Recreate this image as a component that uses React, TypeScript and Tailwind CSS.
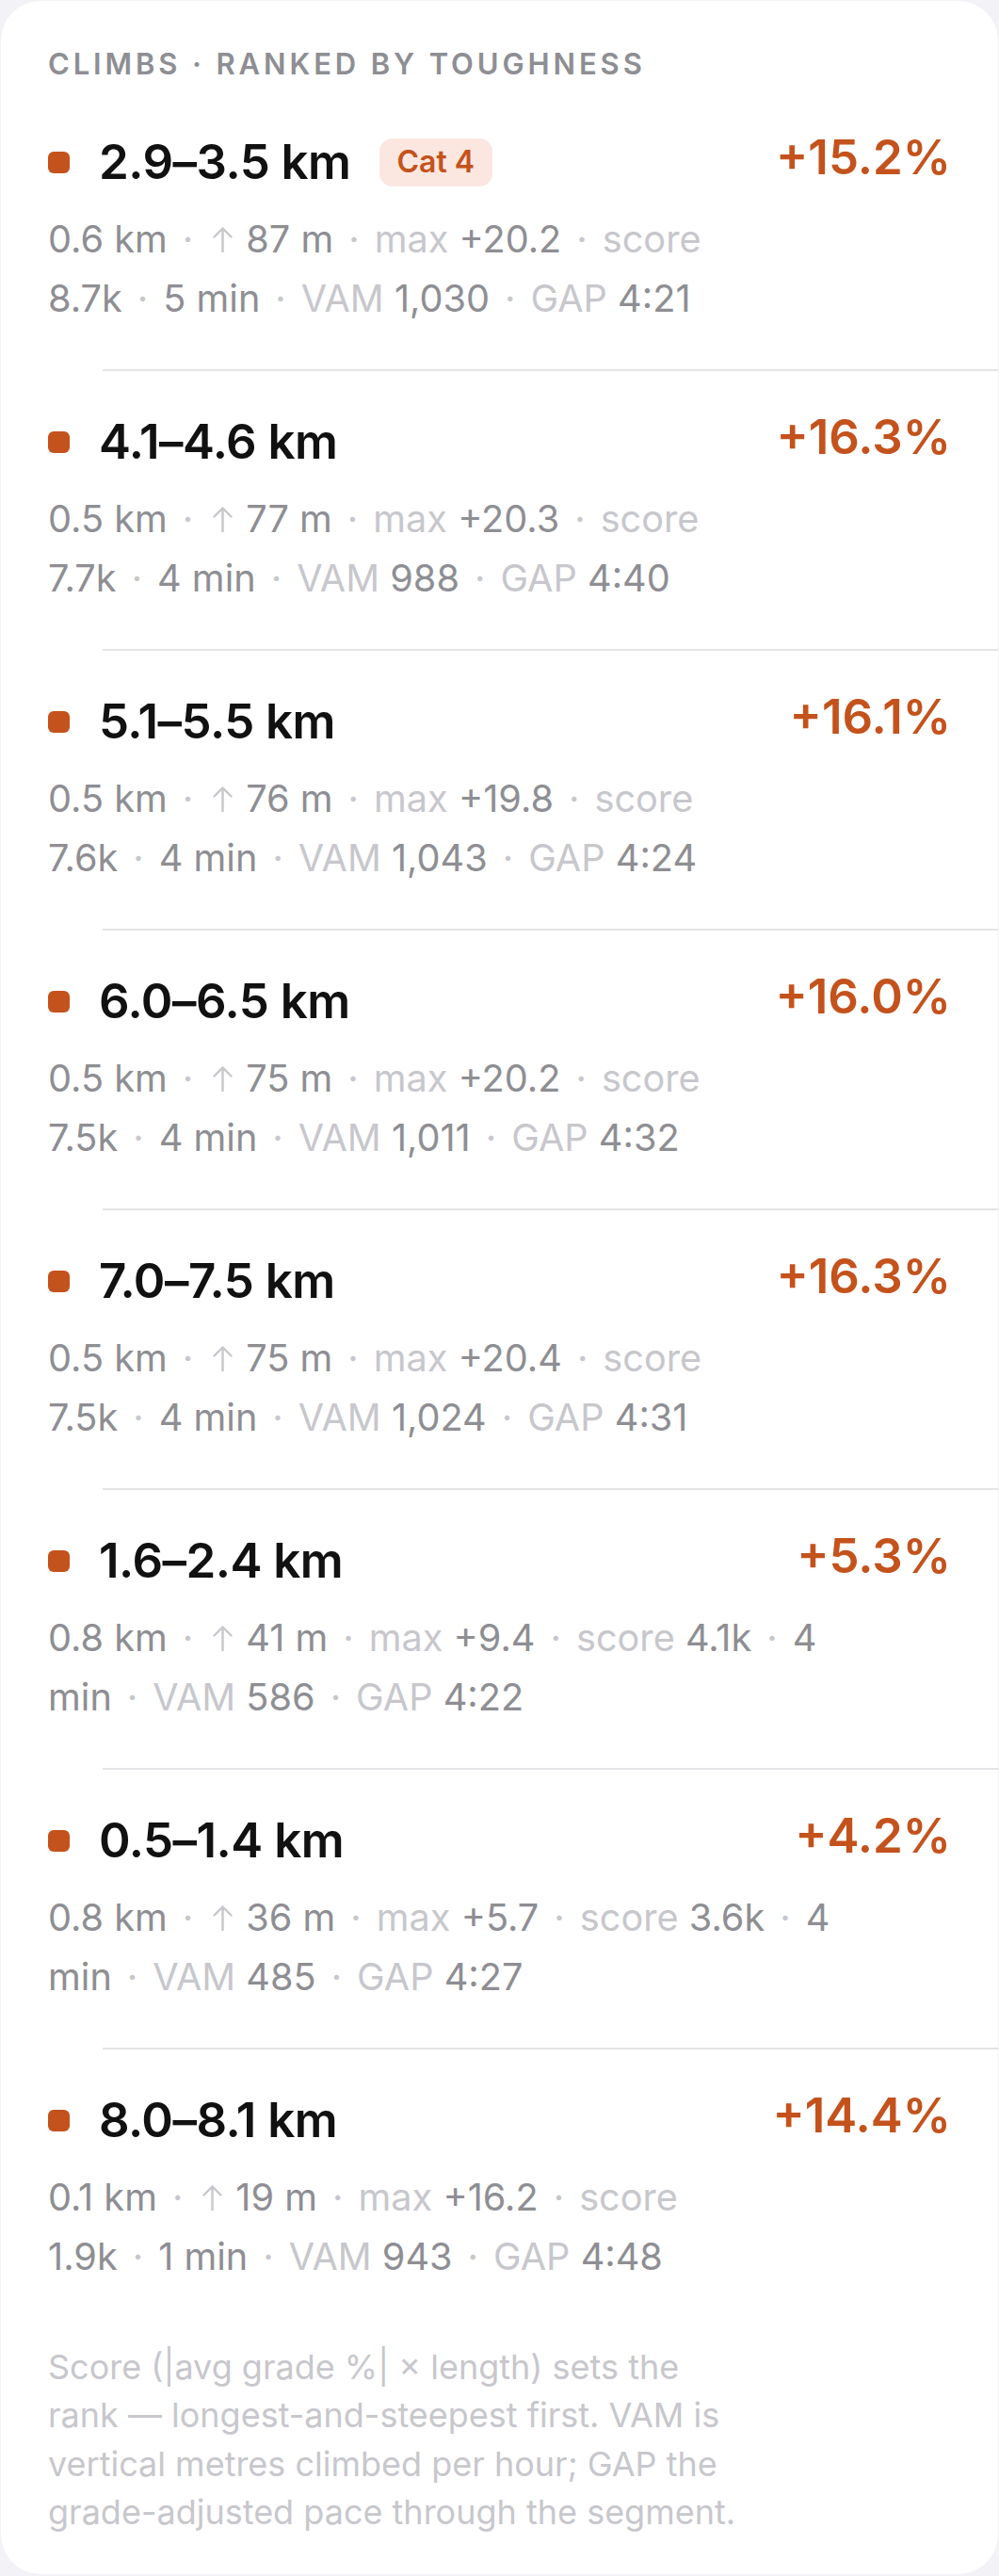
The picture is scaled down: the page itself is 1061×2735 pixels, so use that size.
import React from 'react';

type Climb = {
  range: string;
  cat?: string;
  pct: string;
  km: string;
  gain: string;
  max: string;
  score: string;
  min: string;
  vam: string;
  gap: string;
  wrap: 'long' | 'short';
};

const climbs: Climb[] = [
  { range: '2.9–3.5 km', cat: 'Cat 4', pct: '+15.2%', km: '0.6', gain: '87', max: '+20.2', score: '8.7k', min: '5', vam: '1,030', gap: '4:21', wrap: 'long' },
  { range: '4.1–4.6 km', pct: '+16.3%', km: '0.5', gain: '77', max: '+20.3', score: '7.7k', min: '4', vam: '988', gap: '4:40', wrap: 'long' },
  { range: '5.1–5.5 km', pct: '+16.1%', km: '0.5', gain: '76', max: '+19.8', score: '7.6k', min: '4', vam: '1,043', gap: '4:24', wrap: 'long' },
  { range: '6.0–6.5 km', pct: '+16.0%', km: '0.5', gain: '75', max: '+20.2', score: '7.5k', min: '4', vam: '1,011', gap: '4:32', wrap: 'long' },
  { range: '7.0–7.5 km', pct: '+16.3%', km: '0.5', gain: '75', max: '+20.4', score: '7.5k', min: '4', vam: '1,024', gap: '4:31', wrap: 'long' },
  { range: '1.6–2.4 km', pct: '+5.3%', km: '0.8', gain: '41', max: '+9.4', score: '4.1k', min: '4', vam: '586', gap: '4:22', wrap: 'short' },
  { range: '0.5–1.4 km', pct: '+4.2%', km: '0.8', gain: '36', max: '+5.7', score: '3.6k', min: '4', vam: '485', gap: '4:27', wrap: 'short' },
  { range: '8.0–8.1 km', pct: '+14.4%', km: '0.1', gain: '19', max: '+16.2', score: '1.9k', min: '1', vam: '943', gap: '4:48', wrap: 'long' },
];

const Sep = () => <span className="mx-[16px] inline-block text-[#c7c7cc]">·</span>;
const V = ({ children }: { children: React.ReactNode }) => <span className="text-[#8e8e93]">{children}</span>;
const L = ({ children }: { children: React.ReactNode }) => <span className="text-[#c7c7cc]">{children}</span>;

function UpArrow() {
  return (
    <svg width="23" height="28" viewBox="0 0 23 28" className="ml-[4px] mr-[13px] inline-block align-baseline" fill="none">
      <path d="M11.5 27.5V2.5M2.5 11.5L11.5 2.5L20.5 11.5" stroke="#c7c7cc" strokeWidth="2.4" strokeLinecap="round" strokeLinejoin="round" />
    </svg>
  );
}

function Meta({ c }: { c: Climb }) {
  const head = (
    <>
      <V>{c.km} km</V>
      <Sep />
      <UpArrow />
      <V>{c.gain} m</V>
      <Sep />
      <L>max</L> <V>{c.max}</V>
      <Sep />
      <L>score</L>
    </>
  );
  const tail = (
    <>
      <Sep />
      <L>VAM</L> <V>{c.vam}</V>
      <Sep />
      <L>GAP</L> <V>{c.gap}</V>
    </>
  );
  return (
    <div className="mt-[20px] text-[39.7px] leading-[63px]">
      {c.wrap === 'long' ? (
        <>
          <div className="whitespace-nowrap">{head}</div>
          <div className="whitespace-nowrap">
            <V>{c.score}</V>
            <Sep />
            <V>{c.min} min</V>
            {tail}
          </div>
        </>
      ) : (
        <>
          <div className="whitespace-nowrap">
            {head} <V>{c.score}</V>
            <Sep />
            <V>{c.min}</V>
          </div>
          <div className="whitespace-nowrap">
            <V>min</V>
            {tail}
          </div>
        </>
      )}
    </div>
  );
}

function ClimbRow({ c, last }: { c: Climb; last: boolean }) {
  return (
    <div>
      <div className="pt-[44px] pb-[43px]">
        <div className="flex items-start justify-between">
          <div className="flex h-[62px] items-center">
            <span className="h-[23px] w-[23px] rounded-[6px] bg-[#c4521c]" />
            <span className="ml-[31px] text-[51px] font-semibold leading-[62px] tracking-[-0.01em] text-[#111111]">{c.range}</span>
            {c.cat && (
              <span className="ml-[30px] flex h-[51px] items-center rounded-[14px] bg-[#fbe7e0] px-[19px] text-[32px] font-semibold leading-none text-[#c4521c]">
                {c.cat}
              </span>
            )}
          </div>
          <span className="text-[51px] font-semibold leading-[51px] text-[#c4521c]">{c.pct}</span>
        </div>
        <Meta c={c} />
      </div>
      {!last && <div className="-mr-[50px] ml-[58px] h-[2px] bg-[#e4e4e7]" />}
    </div>
  );
}

export default function App() {
  return (
    <div className="min-h-screen bg-[#f2f2f7] p-px font-['Inter','Noto_Sans',sans-serif]">
      <div className="rounded-[42px] bg-white px-[50px] pt-[49px] pb-[40px]">
        <div className="mb-[11px] text-[31px] font-semibold uppercase leading-[36px] tracking-[0.125em] text-[#8e8e93]">
          Climbs · Ranked by toughness
        </div>
        {climbs.map((c, i) => (
          <ClimbRow key={c.range} c={c} last={i === climbs.length - 1} />
        ))}
        <p className="mt-[17px] text-[36px] leading-[51.3px] text-[#c7c7cc]">
          Score (|avg grade %| × length) sets the
          <br />
          rank — longest-and-steepest first. VAM is
          <br />
          vertical metres climbed per hour; GAP the
          <br />
          grade-adjusted pace through the segment.
        </p>
      </div>
    </div>
  );
}
